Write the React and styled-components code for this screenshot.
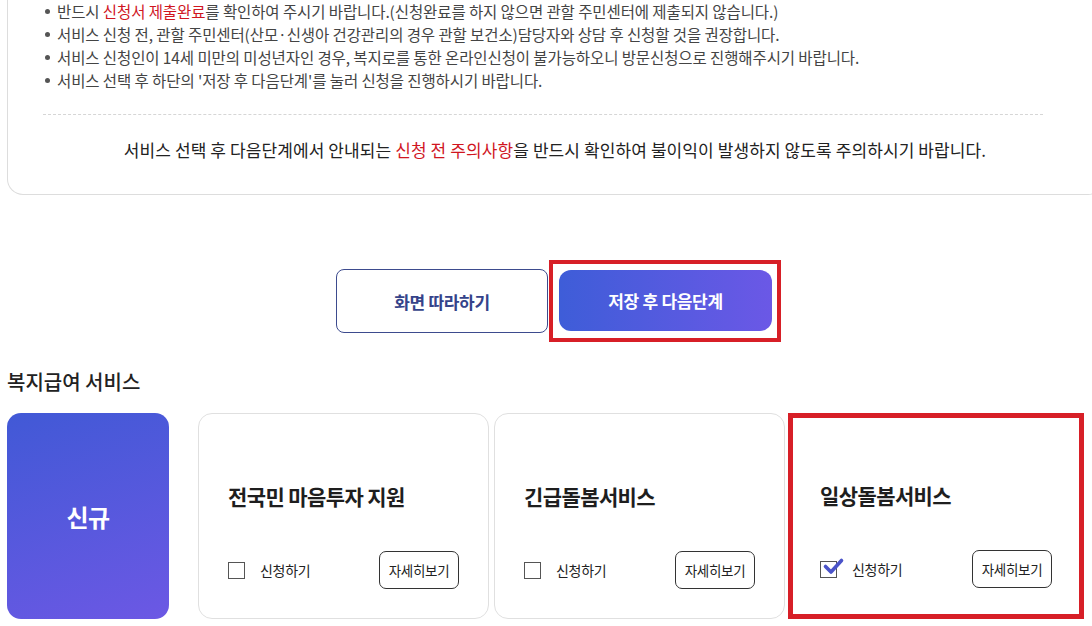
import React from "react";
import styled, { createGlobalStyle } from "styled-components";

const GlobalStyle = createGlobalStyle`
  html, body {
    margin: 0;
    padding: 0;
    background: #ffffff;
    overflow: hidden;
  }
  body {
    font-family: "Noto Sans CJK KR", "Noto Sans", sans-serif;
    color: #222;
  }
  * { box-sizing: border-box; }
`;

const Page = styled.div`
  width: 1092px;
  padding-left: 7px;
`;

const NoticeBox = styled.section`
  width: 1097px;
  border: 1px solid #dddddd;
  border-top: none;
  border-radius: 0 0 16px 16px;
  padding: 0 0 32px 35px;
`;

const NoticeList = styled.ul`
  list-style: none;
  margin: 0;
  padding: 0;
  font-size: 15.5px;
  line-height: 23px;
  color: #444;
  letter-spacing: -0.1px;
`;

const NoticeItem = styled.li`
  position: relative;
  padding-left: 14px;
  white-space: nowrap;
  &::before {
    content: "";
    position: absolute;
    left: 2px;
    top: 9px;
    width: 5px;
    height: 5px;
    border-radius: 50%;
    background: #555;
  }
`;

const Em = styled.span`
  color: #d0161f;
`;

const Divider = styled.hr`
  width: 1000px;
  margin: 22px 0 0 0;
  border: none;
  border-top: 1px dashed #d6d6d6;
`;

const Caution = styled.p`
  width: 1024px;
  margin: 23px 0 0 0;
  text-align: center;
  font-size: 17px;
  line-height: 24px;
  letter-spacing: 0.1px;
  color: #222;
  white-space: nowrap;
`;

const ButtonRow = styled.div`
  display: flex;
  align-items: center;
  justify-content: center;
  gap: 1px;
  margin-top: 65px;
  padding-left: 18px;
`;

const OutlineButton = styled.button`
  width: 212px;
  height: 64px;
  border: 1px solid #3d4b8e;
  border-radius: 8px;
  background: #fff;
  color: #35438a;
  font-family: inherit;
  font-size: 17px;
  font-weight: 700;
  letter-spacing: -0.3px;
  cursor: pointer;
`;

const Highlight = styled.div`
  border: 4px solid #d71f27;
  padding: 6px 5px 7px 6px;
  display: flex;
`;

const PrimaryButton = styled.button`
  width: 213px;
  height: 61px;
  border: none;
  border-radius: 12px;
  background: linear-gradient(90deg, #3e5dd8 0%, #6b58e6 100%);
  color: #fff;
  font-family: inherit;
  font-size: 17px;
  font-weight: 700;
  letter-spacing: -0.3px;
  cursor: pointer;
`;

const SectionTitle = styled.h2`
  margin: 28px 0 0 0;
  font-size: 20px;
  line-height: 24px;
  font-weight: 500;
  letter-spacing: 0;
  color: #222;
`;

const CardRow = styled.div`
  display: flex;
  gap: 5px;
  margin-top: 19px;
  height: 206px;
`;

const NewBadge = styled.div`
  width: 162px;
  margin-right: 24px;
  border-radius: 14px;
  background: linear-gradient(160deg, #4159d6 0%, #6c58e4 100%);
  color: #fff;
  font-size: 24px;
  font-weight: 700;
  display: flex;
  align-items: center;
  justify-content: center;
  letter-spacing: -0.5px;
`;

const Card = styled.div`
  width: ${(p) => (p.$highlighted ? "296px" : "291px")};
  margin-left: ${(p) => (p.$highlighted ? "-2px" : "0")};
  border: ${(p) => (p.$highlighted ? "5px solid #d71f27" : "1px solid #e0e0e0")};
  border-radius: ${(p) => (p.$highlighted ? "0" : "14px")};
  padding: ${(p) => (p.$highlighted ? "0 27px 26px 27px" : "0 29px 29px 29px")};
  display: flex;
  flex-direction: column;
  justify-content: flex-end;
  background: #fff;
`;

const CardTitle = styled.h3`
  margin: 0 0 40px 0;
  font-size: 21px;
  line-height: 30px;
  font-weight: 700;
  letter-spacing: -0.6px;
  color: #1e1e1e;
  white-space: nowrap;
`;

const CardFooter = styled.div`
  display: flex;
  align-items: center;
  justify-content: space-between;
`;

const CheckLabel = styled.label`
  display: flex;
  align-items: center;
  gap: 15px;
  font-size: 14px;
  color: #222;
  letter-spacing: -0.3px;
  cursor: pointer;
`;

const CheckBox = styled.span`
  position: relative;
  width: 17px;
  height: 17px;
  border: 1px solid #555;
  background: #fff;
  flex-shrink: 0;
`;

const CheckMark = styled.svg`
  position: absolute;
  left: 0;
  top: -4px;
  overflow: visible;
`;

const DetailButton = styled.button`
  width: 80px;
  height: 38px;
  border: 1px solid #333;
  border-radius: 7px;
  background: #fff;
  color: #222;
  font-family: inherit;
  font-size: 13.5px;
  letter-spacing: -0.3px;
  padding: 0;
  cursor: pointer;
`;

const services = [
  { title: "전국민 마음투자 지원", checked: false },
  { title: "긴급돌봄서비스", checked: false },
  { title: "일상돌봄서비스", checked: true, highlighted: true },
];

function ServiceCard({ title, checked, highlighted }) {
  return (
    <Card $highlighted={highlighted}>
      <CardTitle>{title}</CardTitle>
      <CardFooter>
        <CheckLabel>
          <CheckBox>
            {checked && (
              <CheckMark width="22" height="18" viewBox="0 0 22 18">
                <path
                  d="M4.5 8.5 L10 14 L20.5 2.5"
                  fill="none"
                  stroke="#4a53c9"
                  strokeWidth="3.6"
                  strokeLinecap="round"
                  strokeLinejoin="round"
                />
              </CheckMark>
            )}
          </CheckBox>
          신청하기
        </CheckLabel>
        <DetailButton>자세히보기</DetailButton>
      </CardFooter>
    </Card>
  );
}

export default function App() {
  return (
    <>
      <GlobalStyle />
      <Page>
        <NoticeBox>
          <NoticeList>
            <NoticeItem>
              반드시 <Em>신청서 제출완료</Em>를 확인하여 주시기 바랍니다.(신청완료를 하지 않으면 관할 주민센터에 제출되지 않습니다.)
            </NoticeItem>
            <NoticeItem>
              서비스 신청 전, 관할 주민센터(산모·신생아 건강관리의 경우 관할 보건소)담당자와 상담 후 신청할 것을 권장합니다.
            </NoticeItem>
            <NoticeItem>
              서비스 신청인이 14세 미만의 미성년자인 경우, 복지로를 통한 온라인신청이 불가능하오니 방문신청으로 진행해주시기 바랍니다.
            </NoticeItem>
            <NoticeItem>
              서비스 선택 후 하단의 '저장 후 다음단계'를 눌러 신청을 진행하시기 바랍니다.
            </NoticeItem>
          </NoticeList>
          <Divider />
          <Caution>
            서비스 선택 후 다음단계에서 안내되는 <Em>신청 전 주의사항</Em>을 반드시 확인하여 불이익이 발생하지 않도록 주의하시기 바랍니다.
          </Caution>
        </NoticeBox>

        <ButtonRow>
          <OutlineButton>화면 따라하기</OutlineButton>
          <Highlight>
            <PrimaryButton>저장 후 다음단계</PrimaryButton>
          </Highlight>
        </ButtonRow>

        <SectionTitle>복지급여 서비스</SectionTitle>

        <CardRow>
          <NewBadge>신규</NewBadge>
          {services.map((s) => (
            <ServiceCard key={s.title} {...s} />
          ))}
        </CardRow>
      </Page>
    </>
  );
}
